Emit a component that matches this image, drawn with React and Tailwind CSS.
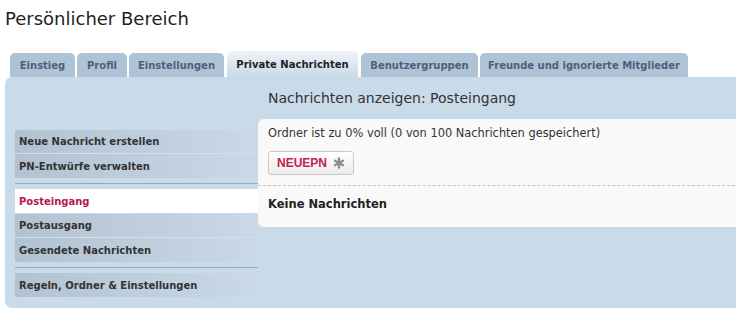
import React from 'react';

const tabs = [
  { label: 'Einstieg', w: 'w-[65px]' },
  { label: 'Profil', w: 'w-[50px]' },
  { label: 'Einstellungen', w: 'w-[95px]' },
  { label: 'Private Nachrichten', w: 'w-[131px]', active: true },
  { label: 'Benutzergruppen', w: 'w-[117px]' },
  { label: 'Freunde und ignorierte Mitglieder', w: 'w-[208px]' },
];

function MenuItem({ label, active, last }) {
  if (active) {
    return (
      <li className="h-[24px] flex items-center pl-[4px] bg-white text-[#b8174a] mb-px">
        {label}
      </li>
    );
  }
  return (
    <li
      className={
        'h-[24px] flex items-center pl-[4px] bg-gradient-to-r from-[#b2c2d1] to-[#c9d9e8] text-[#333] ' +
        (last ? '' : 'border-b border-[#d3dfea]')
      }
    >
      {label}
    </li>
  );
}

export default function App() {
  return (
    <div className="w-[736px] h-[314px] bg-white overflow-hidden font-['DejaVu_Sans',sans-serif]">
      {/* Page title */}
      <h1 className="pl-[5px] pt-[7px] h-[45px] text-[18px] leading-[24px] text-[#222]">
        Persönlicher Bereich
      </h1>

      {/* Tabs */}
      <ul className="flex items-end gap-[2px] pl-[10px] h-[32px]">
        {tabs.map((t) => (
          <li
            key={t.label}
            className={
              'shrink-0 whitespace-nowrap rounded-t-[5px] flex items-center justify-center text-[10px] font-bold ' +
              t.w +
              ' ' +
              (t.active
                ? 'h-[26px] mx-[1px] bg-gradient-to-b from-[#eef3f9] to-[#c9dae9] text-[#222]'
                : 'h-[24px] bg-[#afc3d6] text-[#4e6079]')
            }
          >
            {t.label}
          </li>
        ))}
      </ul>

      {/* Panel */}
      <div className="ml-[5px] w-[760px] h-[231px] bg-[#c9dae9] rounded-tl-[7px] rounded-bl-[7px] flex">
        {/* Left menu */}
        <nav className="ml-[10px] w-[243px] pt-[53px] text-[10px] font-bold">
          <ul>
            <MenuItem label="Neue Nachricht erstellen" />
            <MenuItem label="PN-Entwürfe verwalten" last />
          </ul>
          <div className="h-[11px] flex flex-col justify-center">
            <div className="h-px bg-[#95aabe]" />
          </div>
          <ul>
            <MenuItem label="Posteingang" active />
            <MenuItem label="Postausgang" />
            <MenuItem label="Gesendete Nachrichten" last />
          </ul>
          <div className="h-[11px] flex flex-col justify-center">
            <div className="h-px bg-[#95aabe]" />
          </div>
          <ul>
            <MenuItem label="Regeln, Ordner & Einstellungen" last />
          </ul>
        </nav>

        {/* Content */}
        <div className="flex-1">
          <h2 className="h-[42px] pl-[10px] flex items-center text-[14px] text-[#333]">
            Nachrichten anzeigen: Posteingang
          </h2>
          <div className="bg-[#f9f9f9] rounded-l-[6px] h-[108px]">
            <p className="pl-[10px] pt-[6px] text-[11.4px] leading-[16px] text-[#333]">
              Ordner ist zu 0% voll (0 von 100 Nachrichten gespeichert)
            </p>
            <div className="pl-[10px] pt-[10px] pb-[10px]">
              <button className="h-[24px] w-[86px] flex items-center justify-center gap-[6px] rounded-[3px] border border-[#c8c8c8] bg-gradient-to-b from-white to-[#ececec] font-['Liberation_Sans',sans-serif] text-[12px] font-semibold text-[#c0234b]">
                <span>NEUEPN</span>
                <svg width="12" height="12" viewBox="0 0 12 12">
                  <g stroke="#8c8c8c" strokeWidth="2.4" strokeLinecap="round">
                    <line x1="6" y1="1.5" x2="6" y2="10.5" />
                    <line x1="2" y1="3.8" x2="10" y2="8.2" />
                    <line x1="2" y1="8.2" x2="10" y2="3.8" />
                  </g>
                </svg>
              </button>
            </div>
            <div className="border-t border-dashed border-[#c4c4c4]" />
            <p className="pl-[10px] pt-[10px] text-[11.5px] leading-[16px] font-bold text-[#222]">
              Keine Nachrichten
            </p>
          </div>
        </div>
      </div>
    </div>
  );
}
